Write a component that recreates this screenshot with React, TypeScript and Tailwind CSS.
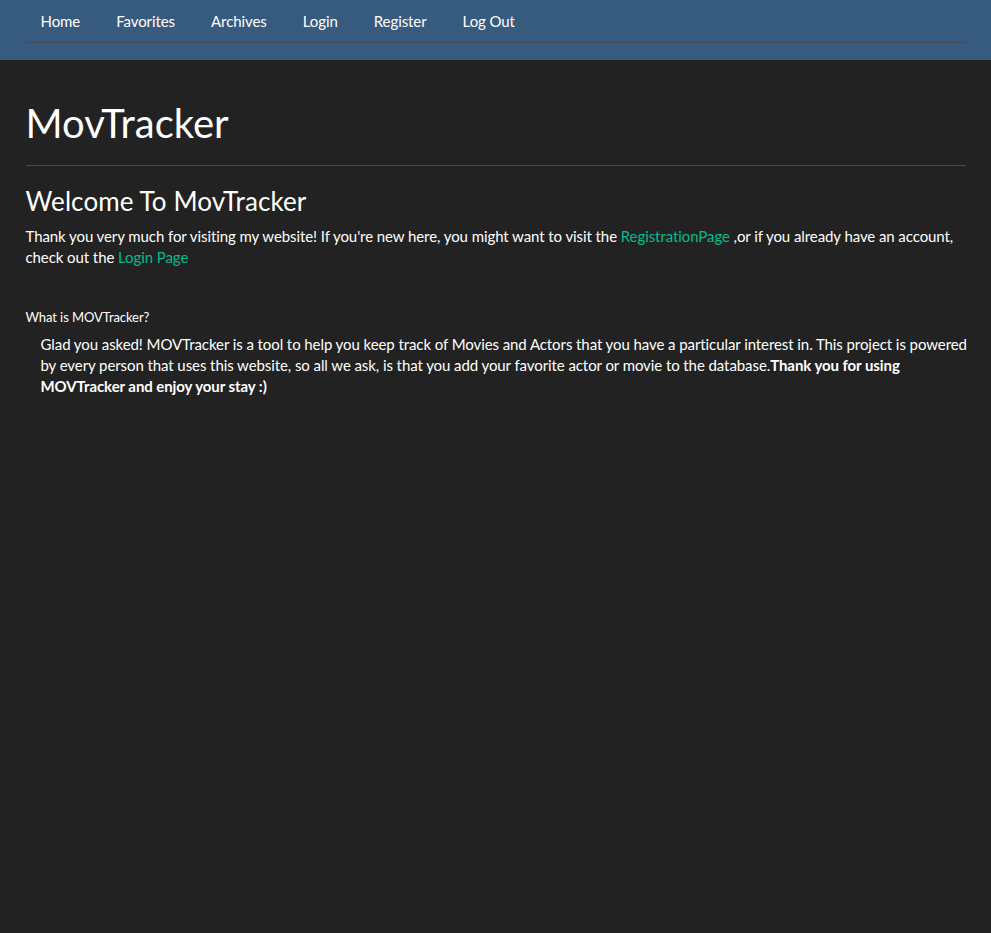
export default function App() {
  const links = ["Home", "Favorites", "Archives", "Login", "Register", "Log Out"];

  return (
    <div className="min-h-screen bg-[#222222] text-white font-['Lato',sans-serif] text-[15px] leading-[21px] tracking-[-0.08px]">
      {/* Navbar */}
      <nav className="h-[60px] bg-[#375a7f]">
        <div className="w-[940px] mx-auto">
          <ul className="flex gap-[6px] border-b border-[#444b52] pl-0">
            {links.map((l) => (
              <li key={l}>
                <a href="#" className="block px-[15px] pt-[11px] pb-[10px] text-white">
                  {l}
                </a>
              </li>
            ))}
          </ul>
        </div>
      </nav>

      {/* Content */}
      <div className="w-[940px] mx-auto pt-[42px]">
        <h1 className="text-[40px] leading-[43px] mb-[20px] tracking-normal">MovTracker</h1>
        <hr className="border-0 border-t border-[#464646]" />

        <h3 className="text-[26px] leading-[29px] mt-[21px] mb-[10px] tracking-[0.1px]">Welcome To MovTracker</h3>
        <p className="mb-[42px]">
          Thank you very much for visiting my website! If you're new here, you might want to visit the{" "}
          <a href="#" className="text-[#00bc8c]">RegistrationPage</a> ,or if you already have an account,
          check out the <a href="#" className="text-[#00bc8c]">Login Page</a>
        </p>

        <h6 className="text-[13px] leading-[14px] mb-[10px]">What is MOVTracker?</h6>
        <p className="pl-[15px] mr-[-5px]">
          Glad you asked! MOVTracker is a tool to help you keep track of Movies and Actors that you have a
          particular interest in. This project is powered by every person that uses this website, so all we
          ask, is that you add your favorite actor or movie to the database.
          <b>Thank you for using MOVTracker and enjoy your stay :)</b>
        </p>
      </div>
    </div>
  );
}
